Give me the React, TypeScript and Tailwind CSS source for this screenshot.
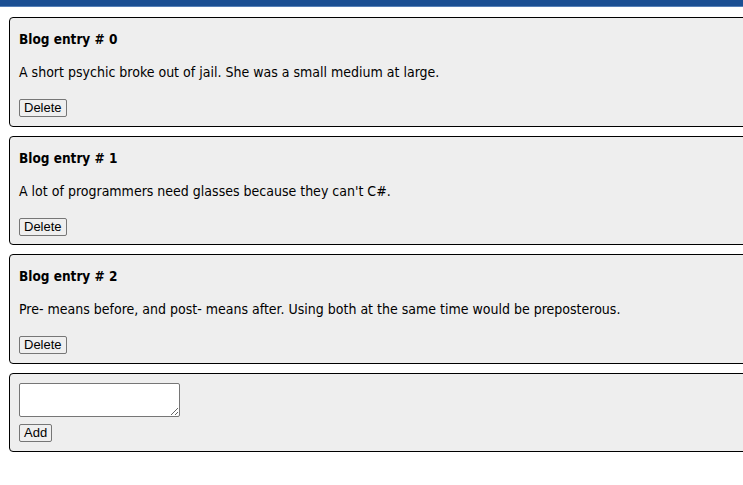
import React, { useState } from 'react';

const initialPosts = [
  "A short psychic broke out of jail. She was a small medium at large.",
  "A lot of programmers need glasses because they can't C#.",
  "Pre- means before, and post- means after. Using both at the same time would be preposterous.",
];

const btn =
  "h-[18px] px-[4px] bg-[#efefef] border border-[#767676] rounded-[2px] text-[13px] leading-[14px] text-black font-['Liberation_Sans',Arial,sans-serif]";

export default function App() {
  const [posts, setPosts] = useState<string[]>(initialPosts);
  const [draft, setDraft] = useState("");

  const addPost = () => {
    if (!draft.trim()) return;
    setPosts(prev => [...prev, draft]);
    setDraft("");
  };

  const removePost = (index: number) => {
    const next = [...posts]; next.splice(index, 1); setPosts(next);
  };

  return (
    <div className="w-[743px] h-[485px] overflow-hidden bg-white font-['DejaVu_Sans_Condensed','DejaVu_Sans',sans-serif] text-[13px] text-black">
      {/* BARRE DU HAUT */}
      <div className="h-[7px] bg-[#1b4f93] border-b border-[#5680b8]" />

      <div className="pt-[10px] pl-[9px] flex flex-col gap-[9px]">
        {posts.map((post, index) => (
          <div key={index} className="w-[760px] h-[109.67px] bg-[#eeeeee] border border-black rounded-[4px] px-[9px] pt-[9px] flex flex-col items-start">
            <h3 className="h-[24px] leading-[24px] font-bold text-[13.5px]">Blog entry # {index}</h3>
            <p className="mt-[13px] h-[16px] leading-[16px] text-[14px]">{post}</p>
            <button onClick={() => removePost(index)} className={`mt-[19px] ${btn}`}>Delete</button>
          </div>
        ))}

        <div className="w-[760px] h-[79px] bg-[#eeeeee] border border-black rounded-[4px] px-[9px] pt-[9px] flex flex-col items-start">
          <textarea
            value={draft}
            onChange={(e) => setDraft(e.target.value)}
            className="w-[161px] h-[34px] bg-white border border-[#767676] rounded-[2px] outline-none"
          />
          <button onClick={addPost} className={`mt-[7px] ${btn}`}>Add</button>
        </div>
      </div>
    </div>
  );
}
